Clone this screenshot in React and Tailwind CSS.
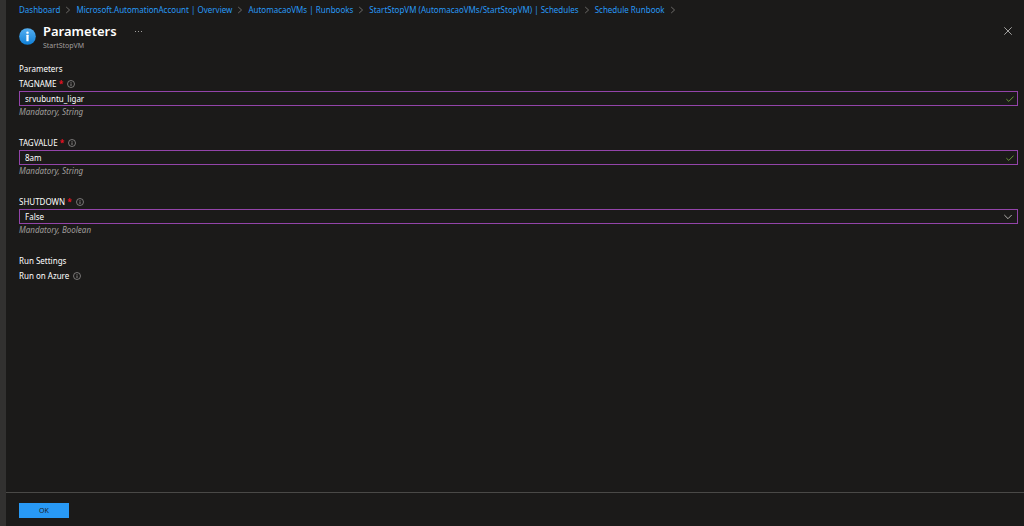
function ChevronRight() {
  return (
    <svg viewBox="0 0 6 8" className="h-2 w-1.5 shrink-0" fill="none" stroke="#6b6967" aria-hidden="true">
      <path d="M1.2 1 4.6 4 1.2 7" />
    </svg>
  );
}

function InfoIcon() {
  return (
    <svg viewBox="0 0 8 8" className="size-2 shrink-0" fill="none" stroke="#a19f9d" aria-hidden="true">
      <circle cx="4" cy="4" r="3.5" strokeWidth="0.7" />
      <path d="M4 3.4V6M4 2v0.8" strokeWidth="0.8" />
    </svg>
  );
}

function BladeIcon() {
  return (
    <svg viewBox="0 0 18 18" className="size-[17px] shrink-0" aria-hidden="true">
      <defs>
        <linearGradient id="blade-blue" x1="0" y1="1" x2="0" y2="0">
          <stop offset="0" stopColor="#0f7fd6" />
          <stop offset="1" stopColor="#56b0f2" />
        </linearGradient>
      </defs>
      <circle cx="9" cy="9" r="8.8" fill="url(#blade-blue)" />
      <circle cx="9" cy="4.9" r="1.3" fill="#fff" />
      <rect x="7.8" y="7.2" width="2.4" height="6.8" rx="0.6" fill="#fff" />
    </svg>
  );
}

function CheckIcon() {
  return (
    <svg viewBox="0 0 8 8" className="size-2 shrink-0" fill="none" stroke="#6b9a3c" aria-hidden="true">
      <path d="M0.4 4.2 2.8 6.4 7.6 1.6" />
    </svg>
  );
}

function ChevronDown() {
  return (
    <svg viewBox="0 0 8 8" className="mr-0.5 size-2 shrink-0" fill="none" stroke="#b3b0ad" aria-hidden="true">
      <path d="M0.3 2 4 5.7 7.7 2" />
    </svg>
  );
}

const crumbs = [
  "Dashboard",
  "Microsoft.AutomationAccount | Overview",
  "AutomacaoVMs | Runbooks",
  "StartStopVM (AutomacaoVMs/StartStopVM) | Schedules",
  "Schedule Runbook",
];

function Breadcrumb() {
  return (
    <nav aria-label="Breadcrumb" className="flex h-5 items-center gap-[5px] whitespace-nowrap text-[#2899f5]">
      {crumbs.map((crumb) => (
        <span key={crumb} className="flex items-center gap-[5px]">
          <a href="#" className="hover:underline">
            {crumb}
          </a>
          <ChevronRight />
        </span>
      ))}
    </nav>
  );
}

function Field({ id, label, hint, icon, children }) {
  return (
    <div className="mb-5">
      <label htmlFor={id} className="flex h-3 items-center gap-1">
        <span>
          {label} <span className="font-bold text-[#e81123]">*</span>
        </span>
        <InfoIcon />
      </label>
      <div className="mt-px flex h-[15px] items-center border border-[#9344a9] pr-[3px]">
        {children}
        {icon}
      </div>
      <p className="h-[11px] leading-3 text-[#a19f9d] italic">{hint}</p>
    </div>
  );
}

export default function App() {
  return (
    <div className="flex min-h-screen bg-[#1b1a19] font-['Noto_Sans','Open_Sans',sans-serif] text-[8px] leading-3 text-white">
      <div className="w-1.5 shrink-0 bg-[#323130]" />
      <div className="flex min-w-0 flex-1 flex-col">
        <header className="pr-1.5 pl-[13px]">
          <Breadcrumb />
          <div className="flex items-start pt-0.5">
            <div className="pt-1.5">
              <BladeIcon />
            </div>
            <div className="ml-[7px]">
              <h1 className="text-[13px] leading-[18px] font-semibold">Parameters</h1>
              <p className="text-[7px] text-[#a19f9d]">StartStopVM</p>
            </div>
            <button type="button" aria-label="More" className="ml-[18px] text-[#a19f9d]">
              <svg viewBox="0 0 8 18" className="h-[18px] w-2" fill="currentColor" aria-hidden="true">
                <rect x="0" y="9" width="1" height="1" />
                <rect x="3" y="9" width="1" height="1" />
                <rect x="6" y="9" width="1" height="1" />
              </svg>
            </button>
            <button type="button" aria-label="Close" className="mr-1.5 ml-auto pt-[5px]">
              <svg viewBox="0 0 8 8" className="size-2" fill="none" stroke="#c8c6c4" aria-hidden="true">
                <path d="M0.3 0.3 7.7 7.7M7.7 0.3 0.3 7.7" strokeWidth="0.8" />
              </svg>
            </button>
          </div>
        </header>

        <main className="flex-1 pt-[11px] pr-1.5 pl-[13px]">
          <h2 className="mb-[3px]">Parameters</h2>
          <Field id="tagname" label="TAGNAME" hint="Mandatory, String" icon={<CheckIcon />}>
            <input id="tagname" type="text" defaultValue="srvubuntu_ligar" className="h-full min-w-0 flex-1 bg-transparent px-[5px] outline-none" />
          </Field>
          <Field id="tagvalue" label="TAGVALUE" hint="Mandatory, String" icon={<CheckIcon />}>
            <input id="tagvalue" type="text" defaultValue="8am" className="h-full min-w-0 flex-1 bg-transparent px-[5px] outline-none" />
          </Field>
          <Field id="shutdown" label="SHUTDOWN" hint="Mandatory, Boolean" icon={<ChevronDown />}>
            <select id="shutdown" defaultValue="False" className="h-full min-w-0 flex-1 appearance-none bg-transparent px-[5px] outline-none">
              <option>True</option>
              <option>False</option>
            </select>
          </Field>
          <h2 className="mb-[3px]">Run Settings</h2>
          <p className="flex items-center gap-1">
            Run on Azure
            <InfoIcon />
          </p>
        </main>

        <footer className="border-t border-[#4a4947] pt-2.5 pb-2 pl-[13px]">
          <button type="button" className="block h-[15px] w-[50px] bg-[#2899f5] text-[7px] text-[#1b1a19]">
            OK
          </button>
        </footer>
      </div>
    </div>
  );
}
